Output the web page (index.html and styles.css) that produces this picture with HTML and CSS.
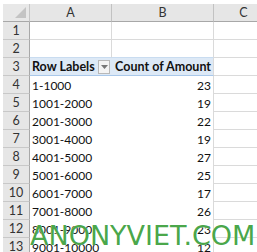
FILE: index.html
```html
<!DOCTYPE html>
<html>
<head>
<meta charset="utf-8">
<link rel="stylesheet" href="styles.css">
</head>
<body>
<div class="page">
  <div class="sheet">
    <div class="corner"><span class="tri"></span></div>
    <div class="colhead">A</div>
    <div class="colhead">B</div>
    <div class="colhead">C</div>

    <div class="rowhead">1</div><div class="cell"></div><div class="cell"></div><div class="cell"></div>
    <div class="rowhead">2</div><div class="cell above"></div><div class="cell above"></div><div class="cell"></div>

    <div class="rowhead">3</div>
    <div class="cell ph"><span class="bold">Row Labels</span><span class="dd"><svg width="7" height="4" viewBox="0 0 7 4"><path d="M0 0H7L3.5 4Z" fill="#777"/></svg></span></div>
    <div class="cell ph bold num-b">Count of Amount</div>
    <div class="cell"></div>

    <div class="rowhead">4</div><div class="cell pv">1-1000</div><div class="cell pv num">23</div><div class="cell"></div>
    <div class="rowhead">5</div><div class="cell pv">1001-2000</div><div class="cell pv num">19</div><div class="cell"></div>
    <div class="rowhead">6</div><div class="cell pv">2001-3000</div><div class="cell pv num">22</div><div class="cell"></div>
    <div class="rowhead">7</div><div class="cell pv">3001-4000</div><div class="cell pv num">19</div><div class="cell"></div>
    <div class="rowhead">8</div><div class="cell pv">4001-5000</div><div class="cell pv num">27</div><div class="cell"></div>
    <div class="rowhead">9</div><div class="cell pv">5001-6000</div><div class="cell pv num">25</div><div class="cell"></div>
    <div class="rowhead">10</div><div class="cell pv">6001-7000</div><div class="cell pv num">17</div><div class="cell"></div>
    <div class="rowhead">11</div><div class="cell pv">7001-8000</div><div class="cell pv num">26</div><div class="cell"></div>
    <div class="rowhead">12</div><div class="cell pv">8001-9000</div><div class="cell pv num">23</div><div class="cell"></div>
    <div class="rowhead">13</div><div class="cell pv">9001-10000</div><div class="cell pv num">12</div><div class="cell"></div>
  </div>
  <div class="watermark">ANONYVIET.COM</div>
</div>
</body>
</html>
```
FILE: styles.css
```css
* { box-sizing: border-box; }
html, body { margin: 0; padding: 0; background: #fff; }
.page {
  position: relative;
  width: 257px;
  height: 252px;
  overflow: hidden;
  padding: 4px 0 0 3px;
  font-family: Lato, "Open Sans", sans-serif;
  font-size: 12px;
  color: #111;
}
.sheet {
  display: grid;
  grid-template-columns: 27px 82px 102px 60px;
  grid-auto-rows: 18px;
}
.corner {
  background: #e8e8e8;
  border-right: 1px solid #c6c6c6;
  border-bottom: 1px solid #a8a8a8;
  position: relative;
}
.tri {
  position: absolute;
  right: 3px;
  bottom: 3px;
  width: 0; height: 0;
  border-left: 11px solid transparent;
  border-bottom: 11px solid #c4c4c4;
}
.colhead {
  background: #e6e6e6;
  border-right: 1px solid #c2c2c2;
  border-bottom: 1px solid #a8a8a8;
  display: flex;
  align-items: center;
  justify-content: center;
  color: #333;
  font-size: 12.5px;
}
.rowhead {
  background: #e6e6e6;
  border-right: 1px solid #a8a8a8;
  border-bottom: 1px solid #c8c8c8;
  display: flex;
  align-items: center;
  justify-content: center;
  color: #333;
  font-size: 12.5px;
}
.cell {
  border-right: 1px solid #dadada;
  border-bottom: 1px solid #dadada;
  display: flex;
  align-items: center;
  padding: 0 2px;
  white-space: nowrap;
}
.cell.above { border-bottom-color: #c9dcf0; }
.ph {
  background: #dde9f6;
  border-bottom: 1px solid #a9c8ea;
  border-right: none;
}
.ph + .ph { border-right: 1px solid #dadada; }
.pv { border-bottom: none; border-right: none; background: #fff; }
.pv.num { border-right: 1px solid #dadada; }
.num { justify-content: flex-end; }
.num-b { justify-content: flex-end; }
.bold { font-weight: 700; font-size: 12.5px; }
.dd {
  flex-shrink: 0;
  margin-left: auto;
  width: 12px;
  height: 14px;
  border: 1px solid #b8b8b8;
  background: #f4f4f4;
  display: flex;
  align-items: center;
  justify-content: center;
}
.watermark {
  position: absolute;
  left: 30px;
  top: 220px;
  font-family: "DejaVu Sans", sans-serif;
  font-size: 27px;
  color: rgba(50, 155, 50, 0.9);
  white-space: nowrap;
  text-shadow: 0 0 1px #fff;
}
```
